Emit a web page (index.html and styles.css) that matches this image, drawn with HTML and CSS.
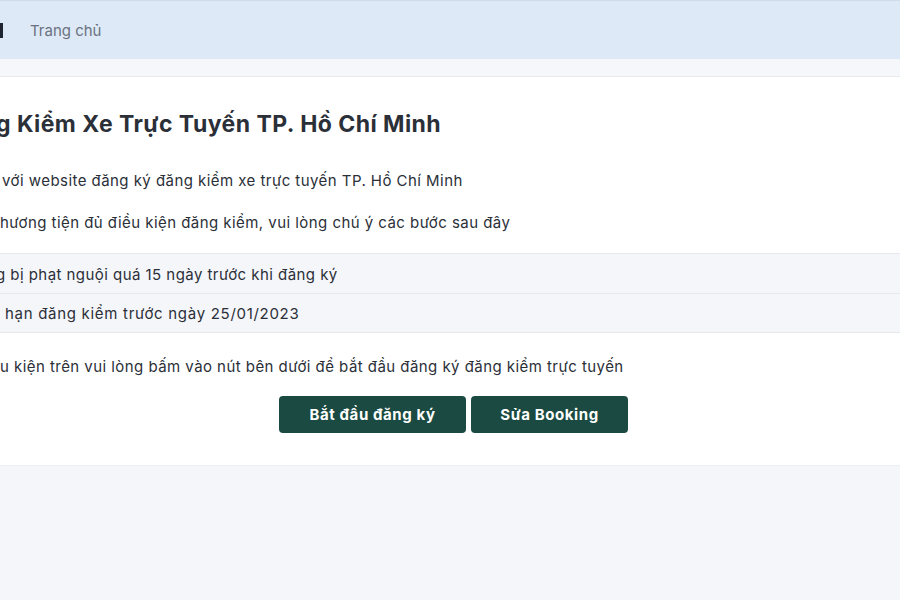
FILE: index.html
```html
<!DOCTYPE html>
<html lang="vi">
<head>
<meta charset="utf-8">
<title>Đăng Ký Đăng Kiểm Xe Trực Tuyến</title>
<link rel="stylesheet" href="styles.css">
</head>
<body>
<header class="topbar">
  <span class="brand-edge"></span>
  <nav class="nav"><a class="nav-link" href="#">Trang chủ</a></nav>
</header>
<div class="subbar"></div>
<main class="card">
  <h1 class="title">g Kiểm Xe Trực Tuyến TP. Hồ Chí Minh</h1>
  <p class="para p1">với website đăng ký đăng kiểm xe trực tuyến TP. Hồ Chí Minh</p>
  <p class="para p2">hương tiện đủ điều kiện đăng kiểm, vui lòng chú ý các bước sau đây</p>
  <ul class="rules">
    <li class="rule r1">g bị phạt nguội quá 15 ngày trước khi đăng ký</li>
    <li class="rule r2">hạn đăng kiểm trước ngày 25/01/2023</li>
  </ul>
  <p class="para p3">u kiện trên vui lòng bấm vào nút bên dưới để bắt đầu đăng ký đăng kiểm trực tuyến</p>
  <div class="actions">
    <button class="btn btn-start">Bắt đầu đăng ký</button>
    <button class="btn btn-edit">Sửa Booking</button>
  </div>
</main>
</body>
</html>
```
FILE: styles.css
```css
* { box-sizing: border-box; }
html, body { margin: 0; padding: 0; }
body {
  background: #f5f6fa;
  font-family: Inter, "Noto Sans", sans-serif;
  color: #2b2f38;
  overflow: hidden;
  width: 900px;
  height: 600px;
}
.topbar {
  height: 59px;
  border-top: 1px solid #cfdbe8;
  background: #dde9f7;
  display: flex;
  align-items: center;
}
.brand-edge {
  width: 3px;
  height: 15px;
  background: #1f2530;
  margin-top: 1px;
}
.nav { padding-left: 27px; }
.nav-link {
  font-size: 15px;
  color: #6b7280;
  text-decoration: none;
  letter-spacing: 0;
}
.subbar {
  height: 18px;
  background: #f5f7fb;
  border-bottom: 1px solid #e8eaf0;
}
.card {
  background: #fff;
  border-bottom: 1px solid #eceef2;
  padding: 32px 0 32px 0;
}
.title {
  margin: 0;
  font-size: 23px;
  line-height: 30px;
  font-weight: 700;
  letter-spacing: 0.45px;
  text-indent: -4px;
  color: #2b2f38;
}
.para {
  margin: 0;
  font-size: 15px;
  line-height: 24px;
  letter-spacing: 0.45px;
  color: #2b2f38;
}
.p1 { margin-top: 30px; padding-left: 2px; }
.p2 { margin-top: 18px; }
.rules {
  list-style: none;
  margin: 18px 0 0 0;
  padding: 0;
}
.rule {
  height: 40px;
  display: flex;
  align-items: center;
  background: #f5f6fa;
  border-top: 1px solid #e6e8ee;
  font-size: 15px;
  letter-spacing: 0.45px;
  padding-top: 1px;
}
.rule:last-child { border-bottom: 1px solid #e6e8ee; }
.r1 { text-indent: -4px; }
.r2 { padding-left: 5px; letter-spacing: 0.7px; }
.p3 { margin-top: 22px; }
.actions {
  display: flex;
  gap: 5px;
  padding-left: 279px;
  margin-top: 17px;
}
.btn {
  height: 37px;
  border: none;
  border-radius: 4px;
  background: #1a4a41;
  color: #fff;
  font-family: Inter, "Noto Sans", sans-serif;
  font-size: 15px;
  font-weight: 700;
  letter-spacing: 0.6px;
  padding: 0;
  cursor: pointer;
}
.btn-start { width: 187px; }
.btn-edit { width: 157px; }
```
